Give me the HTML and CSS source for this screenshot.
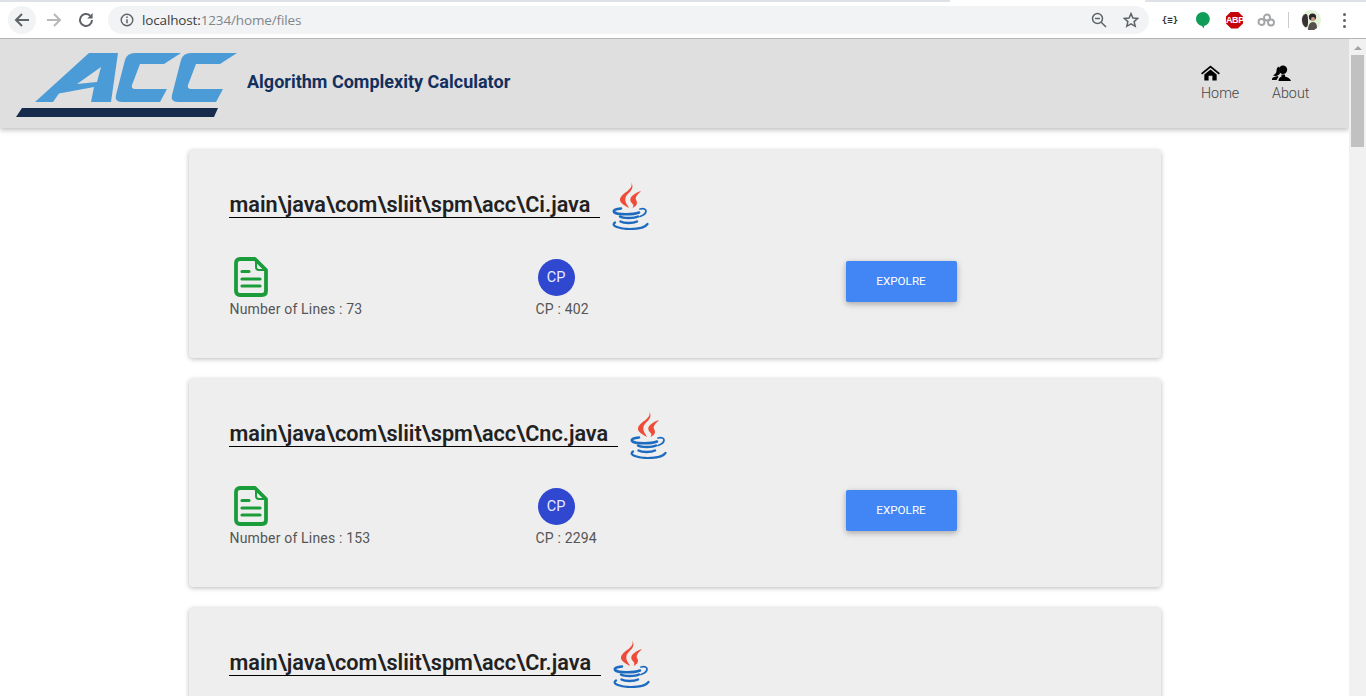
FILE: index.html
```html
<!DOCTYPE html>
<html lang="en">
<head>
<meta charset="utf-8">
<title>Algorithm Complexity Calculator</title>
<link rel="stylesheet" href="styles.css">
</head>
<body>
<div class="app">
  <div class="browser">
    <div class="tabstrip"><span class="strip-a"></span><span class="strip-b"></span><span class="strip-c"></span></div>
    <div class="toolbar">
      <span class="nav-btn nav-active">
        <svg width="18" height="18" viewBox="0 0 18 18"><path d="M16 9H3M9 3L3 9l6 6" fill="none" stroke="#5f6368" stroke-width="2"/></svg>
      </span>
      <span class="nav-btn">
        <svg width="18" height="18" viewBox="0 0 18 18"><path d="M2 9h13M9 3l6 6-6 6" fill="none" stroke="#b6b8ba" stroke-width="2"/></svg>
      </span>
      <span class="nav-btn">
        <svg width="18" height="18" viewBox="0 0 18 18"><path d="M15 9a6 6 0 1 1-1.8-4.3" fill="none" stroke="#5f6368" stroke-width="2"/><path d="M15.6 2v5.4h-5.4z" fill="#5f6368"/></svg>
      </span>
      <div class="omnibox">
        <svg class="info" width="14" height="14" viewBox="0 0 14 14"><circle cx="7" cy="7" r="5.8" fill="none" stroke="#5f6368" stroke-width="1.4"/><path d="M7 6.2v4M7 3.6v1.5" stroke="#5f6368" stroke-width="1.5"/></svg>
        <span class="url"><span class="url-host">localhost:</span>1234/home/files</span>
        <svg class="omni-zoom" width="16" height="16" viewBox="0 0 16 16"><circle cx="6.5" cy="6.5" r="5" fill="none" stroke="#5f6368" stroke-width="1.5"/><path d="M10.2 10.2L15 15M4 6.5h5" stroke="#5f6368" stroke-width="1.5"/></svg>
        <svg class="omni-star" width="16" height="16" viewBox="0 0 16 16"><path d="M8 1.6l1.9 4.4 4.8.4-3.6 3.2 1.1 4.7L8 11.8l-4.2 2.5 1.1-4.7-3.6-3.2 4.8-.4z" fill="none" stroke="#5f6368" stroke-width="1.5"/></svg>
      </div>
      <div class="extensions">
        <span class="ext ext-json">{≡}</span>
        <span class="ext ext-hangouts"><svg width="16" height="18" viewBox="0 0 16 18"><path d="M8 1a7 7 0 0 0-1.2 13.9L9 17.5v-2.6A7 7 0 0 0 8 1z" fill="#0f9d58"/></svg></span>
        <span class="ext"><span class="abp">ABP</span></span>
        <span class="ext"><svg width="18" height="14" viewBox="0 0 18 14"><g fill="none" stroke="#a3a5a7" stroke-width="1.9"><circle cx="4.5" cy="9" r="3"/><circle cx="10" cy="4.5" r="3"/><circle cx="14" cy="9.5" r="3"/></g></svg></span>
        <span class="divider"></span>
        <span class="avatar"><svg width="20" height="20" viewBox="0 0 20 20"><circle cx="10" cy="10" r="10" fill="#e4f2d8"/><path d="M1 10c0-4 2-6 4-6s2 5 2 9-2 5-3 4-3-3-3-7z" fill="#3a3036"/><circle cx="11.500" cy="7" r="3.600" fill="#2a2226"/><path d="M7 20c0-5 2-8 5-8s4 3 4 6l-3 2z" fill="#55504f"/><circle cx="12" cy="9" r="2" fill="#c79a84"/></svg></span>
        <span class="kebab"><i></i><i></i><i></i></span>
      </div>
    </div>
  </div>

  <div class="main">
    <div class="viewport">
      <header class="header">
        <svg class="logo" width="224" height="66" viewBox="0 0 224 66">
          <g fill="#4b9cd6">
            <path d="M20 51L74 2H103L96 51H76L79 36L44 42.500L38 51ZM86 16L62 33L82 31Z" fill-rule="evenodd"/>
            <path d="M120 2H166L149 13H125L117 34Q116 38 120 38H152L145 51H107Q99 51 101 44L110 9Q112 2 120 2Z"/>
            <path d="M176 2H222L205 13H181L173 34Q172 38 176 38H208L201 51H163Q155 51 157 44L166 9Q168 2 176 2Z"/>
          </g>
          <path d="M7 57H203L199 66H1Z" fill="#172b4d"/>
        </svg>
        <h1 class="app-title">Algorithm Complexity Calculator</h1>
        <nav class="nav">
          <a class="nav-item">
            <svg width="19" height="16" viewBox="0 0 20 16"><path d="M10 0L0 8.200l1.300 1.500L10 2.600l8.700 7.100L20 8.200z" fill="#000"/><path d="M3.500 9.500L10 4.200l6.500 5.300V16h-4.500v-5H8v5H3.500z" fill="#000"/></svg>
            <span>Home</span>
          </a>
          <a class="nav-item nav-about">
            <svg width="19" height="16" viewBox="0 0 19 16"><circle cx="11" cy="4.800" r="4.200" fill="#000"/><path d="M6.500 16c0-2.500 1-3.500 3-4.500v-2h3.500v2c3 1 5.500 2 6 4.500z" fill="#000"/><path d="M7 1.500C5 2 4.500 4 4.500 6S3 9 1 10.500c2 .8 4 .6 5.500-.5L8 8.500z" fill="#000"/><path d="M0 13.500c1-1.500 3-2 5.500-2.500l1 1-2 3H0z" fill="#000"/></svg>
            <span>About</span>
          </a>
        </nav>
      </header>

      <div class="cards">
        <section class="card">
          <div class="card-head">
            <h2 class="file-name">main\java\com\sliit\spm\acc\Ci.java</h2>
            <svg class="java" width="38" height="48" viewBox="0 0 38 48"><use href="#java-logo"/></svg>
          </div>
          <div class="metrics">
            <div class="metric">
              <svg class="doc" width="34" height="40" viewBox="0 0 34 40"><use href="#doc-icon"/></svg>
              <p class="metric-label">Number of Lines : 73</p>
            </div>
            <div class="metric">
              <div class="cp-slot"><span class="cp">CP</span></div>
              <p class="metric-label">CP : 402</p>
            </div>
            <div class="metric"><button class="explore">Expolre</button></div>
          </div>
        </section>

        <section class="card">
          <div class="card-head">
            <h2 class="file-name">main\java\com\sliit\spm\acc\Cnc.java</h2>
            <svg class="java" width="38" height="48" viewBox="0 0 38 48"><use href="#java-logo"/></svg>
          </div>
          <div class="metrics">
            <div class="metric">
              <svg class="doc" width="34" height="40" viewBox="0 0 34 40"><use href="#doc-icon"/></svg>
              <p class="metric-label">Number of Lines : 153</p>
            </div>
            <div class="metric">
              <div class="cp-slot"><span class="cp">CP</span></div>
              <p class="metric-label">CP : 2294</p>
            </div>
            <div class="metric"><button class="explore">Expolre</button></div>
          </div>
        </section>

        <section class="card">
          <div class="card-head">
            <h2 class="file-name">main\java\com\sliit\spm\acc\Cr.java</h2>
            <svg class="java" width="38" height="48" viewBox="0 0 38 48"><use href="#java-logo"/></svg>
          </div>
        </section>
      </div>
    </div>

    <div class="scrollbar">
      <span class="scroll-up"></span>
      <span class="scroll-thumb"></span>
    </div>
  </div>
</div>

<svg class="defs" width="0" height="0">
  <defs>
    <g id="java-logo">
      <path d="M20 0C24 8 9 11 9 18C9 21 13 23 18 26C16 22 13.500 20 14.500 16C15.500 11 25 8 20 0Z" fill="#ee4c38"/>
      <path d="M30 9C24 11 18 15 19.500 19C20.500 22 24 22 21.500 26C26 24 27 21 25 18C24 15 26 13 30 9Z" fill="#ee4c38"/>
      <g fill="none" stroke="#1c6bc0" stroke-linecap="round">
        <path d="M10 26.500C5 27 2 28 3 30C6 33 22 33 28 30.500" stroke-width="2.600"/>
        <path d="M29 27C37 25 37 32 29 34.500" stroke-width="1.800"/>
        <path d="M9 34.500C12 36.500 23 36.500 27 34.500" stroke-width="2.500"/>
        <path d="M9.500 39.500C13 41.500 22 41.500 26 39.500" stroke-width="2.500"/>
        <path d="M4 40.500C-1 44 9 47 19 47C27 47 34 45.500 36.500 42" stroke-width="2.200"/>
      </g>
    </g>
    <g id="doc-icon">
      <path d="M6 2H21L32 13V34Q32 38 28 38H6Q2 38 2 34V6Q2 2 6 2Z" fill="none" stroke="#1b9c3a" stroke-width="3.800" stroke-linejoin="round"/>
      <path d="M22 4V10Q22 13 25 13H30" fill="none" stroke="#1b9c3a" stroke-width="2"/>
      <path d="M8 14.500H15M8 22H26M8 29H26" fill="none" stroke="#1b9c3a" stroke-width="3.200" stroke-linecap="round"/>
    </g>
  </defs>
</svg>
</body>
</html>
```
FILE: styles.css
```css
* { box-sizing: border-box; }
html, body { margin: 0; padding: 0; height: 100%; overflow: hidden; }
body { font-family: Roboto, "Liberation Sans", sans-serif; background: #fff; color: #212121; }
.app { height: 100%; display: flex; flex-direction: column; }
.defs { display: block; height: 0; }

.browser { flex: none; height: 39px; background: #fff; border-bottom: 1px solid #b4b4b4; }
.tabstrip { display: flex; height: 2px; }
.strip-a { width: 950px; background: #dee1e6; }
.strip-b { width: 195px; background: #fff; }
.strip-c { flex: 1; background: #dee1e6; }
.toolbar { display: flex; align-items: center; height: 36px; padding-left: 8px; padding-bottom: 0; }
.nav-btn { width: 28px; height: 28px; margin-right: 4px; border-radius: 50%; display: flex; align-items: center; justify-content: center; }
.nav-active { background: #f1f3f4; }
.omnibox { display: flex; align-items: center; width: 1041px; height: 28px; margin-left: 4px; border-radius: 14px; background: #f1f3f4; padding-left: 12px; }
.url { margin-left: 8px; font: 13.5px/28px "Open Sans", Roboto, sans-serif; color: #80868b; flex: 1; letter-spacing: -.14px; }
.url-host { color: #3c4043; }
.omni-zoom { margin-right: 16px; }
.omni-star { margin-right: 10px; }
.extensions { display: flex; align-items: center; height: 28px; flex: 1; padding-left: 5px; }
.ext { width: 32px; display: flex; align-items: center; justify-content: center; }
.ext-json { font: bold 9px "DejaVu Sans Mono", monospace; color: #333; }
.ext-hangouts { padding-left: 2px; }
.abp { width: 17px; height: 17px; margin-left: 1px; background: #c4030b; color: #fff; font: bold 9px/17px "Liberation Sans", sans-serif; text-align: center; clip-path: polygon(30% 0, 70% 0, 100% 30%, 100% 70%, 70% 100%, 30% 100%, 0 70%, 0 30%); letter-spacing: -.4px; }
.divider { width: 1px; height: 16px; background: #ccc; margin: 0 12px 0 6px; }
.avatar { width: 20px; height: 20px; display: block; }
.avatar svg { display: block; }
.kebab { display: flex; flex-direction: column; gap: 3px; margin-left: 22px; }
.kebab i { width: 3px; height: 3px; border-radius: 50%; background: #5f6368; display: block; }

.main { flex: 1; min-height: 0; display: flex; }
.viewport { flex: 1; min-width: 0; overflow: hidden; }
.scrollbar { flex: none; width: 17px; background: #f1f1f1; display: flex; flex-direction: column; align-items: center; }
.scroll-up { width: 0; height: 0; margin: 7px 0 5px; border-left: 4px solid transparent; border-right: 4px solid transparent; border-bottom: 4px solid #a3a3a3; }
.scroll-thumb { width: 13px; height: 92px; background: #c1c1c1; }

.header { display: flex; align-items: center; height: 89px; padding-left: 15px; background: #dfdfdf; box-shadow: 0 2px 5px rgba(0,0,0,.26); position: relative; }
.logo { flex: none; }
.app-title { margin: 0 0 3px 8px; font-size: 18px; font-weight: 700; line-height: 24px; color: #12305e; }
.nav { margin-left: auto; display: flex; padding-right: 40px; align-self: flex-start; padding-top: 26px; }
.nav-item { display: flex; flex-direction: column; align-items: flex-start; width: 71px; font-size: 14.3px; font-weight: 300; color: #444; line-height: 20px; }
.nav-item svg { display: block; margin-bottom: 2px; }
.nav-about { width: 37px; }

.cards { width: 972px; margin: 0 auto; padding-top: 22px; display: flex; flex-direction: column; gap: 21px; }
.card { flex: none; height: 208px; padding: 32px 40px 0; background: #eee; border-radius: 4px; box-shadow: 0 1px 5px rgba(0,0,0,.28); }
.card-head { display: flex; align-items: flex-start; }
.file-name { margin: 8px 0 0; padding: 3px 10px 0 1px; font-size: 21.65px; font-weight: 600; line-height: 24px; color: #212121; border-bottom: 1px solid #000; }
.java { flex: none; margin-left: 11px; }
.metrics { display: grid; grid-template-columns: 306px 311px 1fr; margin-top: 27px; }
.doc { display: block; margin-left: 5px; }
.metric-label { margin: 2px 0 0 1px; font-size: 14px; line-height: 20px; color: #555; letter-spacing: .18px; }
.cp-slot { height: 40px; padding: 2px 0 0 3px; }
.cp { width: 37px; height: 37px; padding-bottom: 1px; border-radius: 50%; background: #3047cf; color: #e8ecff; font-size: 14.5px; display: flex; align-items: center; justify-content: center; }
.explore { display: block; width: 111px; height: 41px; margin-top: 4px; padding: 0 0 2px; border: 0; border-radius: 2px; background: #4285f4; color: #fff; font: 400 11.7px Roboto, sans-serif; text-transform: uppercase; box-shadow: 0 2px 5px rgba(0,0,0,.2), 0 2px 8px rgba(0,0,0,.12); }
```
